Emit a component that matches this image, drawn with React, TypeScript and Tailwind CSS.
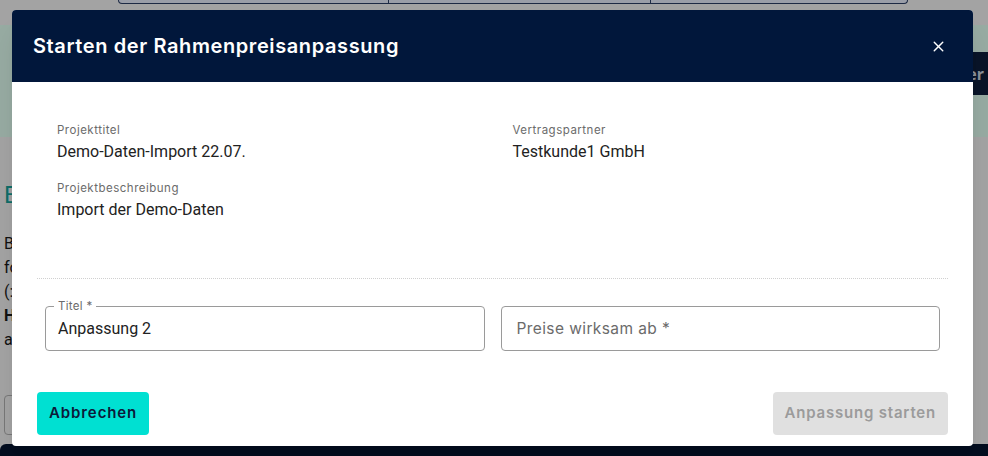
import { X } from 'lucide-react'

const heading = "font-['Inter','Noto_Sans',sans-serif]"
const body = "font-['Roboto','Liberation_Sans',sans-serif]"

function Backdrop() {
  return (
    <div className="pointer-events-none flex h-full flex-col">
      <div className="ml-[118px] flex h-[4px] w-[790px] rounded-b-[4px] border border-t-0 border-[#1d2a44] bg-[#9a9ea8]">
        <div className="w-[270px] border-r border-[#1d2a44]" />
        <div className="w-[262px] border-r border-[#1d2a44]" />
      </div>
      <div className="mt-[21px] flex h-[112px] items-start bg-[#97aba2]">
        <div className="ml-auto mt-[27px] flex h-[43px] w-[60px] items-center justify-end bg-[#091428] pr-1 text-[16px] font-bold text-[#8a9099]">
          er
        </div>
      </div>
      <div className={`${body} mt-[40px] pl-[4px] text-[24px] text-[#0f6d68]`}>E</div>
      <div className={`${body} mt-[20px] flex flex-col gap-[2px] pl-[4px] text-[16px] leading-[22px] text-[#111]`}>
        <div>B</div>
        <div>fo</div>
        <div>(:</div>
        <div className="font-bold">H</div>
        <div>a</div>
      </div>
      <div className="ml-[4px] mt-[44px] h-[40px] w-[30px] rounded-[4px] border border-[#777]" />
      <div className="mt-auto h-[12px] rounded-tl-[6px] bg-[#030d1f]" />
    </div>
  )
}

function Info({ label, value }: { label: string; value: string }) {
  return (
    <div className="flex flex-col">
      <div className={`${heading} text-[11.5px] leading-[16px] tracking-[0.5px] text-[#6b6b6b]`}>{label}</div>
      <div className={`${body} mt-[4px] text-[16px] leading-[20px] text-[#222]`}>{value}</div>
    </div>
  )
}

export default function App() {
  return (
    <div className="relative h-[456px] w-[988px] overflow-hidden bg-[#a3a3a3]">
      <Backdrop />
      <div className="absolute left-[12px] top-[10px] flex h-[436px] w-[961px] flex-col overflow-hidden rounded-[4px] bg-white shadow-xl">
        <div className="flex h-[72px] shrink-0 items-center justify-between bg-[#01173b] pl-[21px] pr-[26px]">
          <h2 className={`${heading} text-[20px] font-semibold tracking-[0.6px] text-white`}>
            Starten der Rahmenpreisanpassung
          </h2>
          <X size={17} strokeWidth={2} className="text-white" />
        </div>

        <div className="flex flex-1 flex-col px-[25px]">
          <div className="grid grid-cols-2 gap-x-[16px] px-[20px] pt-[40px]">
            <div className="flex flex-col gap-[18px]">
              <Info label="Projekttitel" value="Demo-Daten-Import 22.07." />
              <Info label="Projektbeschreibung" value="Import der Demo-Daten" />
            </div>
            <div className="pl-[12px]">
              <Info label="Vertragspartner" value="Testkunde1 GmbH" />
            </div>
          </div>

          <div className="mt-[58px] border-t border-dotted border-[#d0d0d0]" />

          <div className="mt-[27px] grid grid-cols-2 gap-x-[16px] px-[8px]">
            <div className="relative h-[45px] rounded-[4px] border border-[#9a9a9a]">
              <span className={`${heading} absolute -top-[8px] left-[8px] bg-white px-[4px] text-[11.5px] leading-[14px] tracking-[0.3px] text-[#6b6b6b]`}>
                Titel *
              </span>
              <div className={`${body} flex h-full items-center pl-[12px] text-[16px] text-[#222]`}>
                Anpassung 2
              </div>
            </div>
            <div className="h-[45px] rounded-[4px] border border-[#9a9a9a]">
              <div className={`${heading} flex h-full items-center pl-[15px] text-[15.5px] tracking-[0.4px] text-[#6b6b6b]`}>
                Preise wirksam ab *
              </div>
            </div>
          </div>

          <div className="mt-[41px] flex items-center justify-between">
            <button className={`${heading} h-[43px] rounded-[4px] bg-[#00e0d2] px-[12px] text-[15px] font-semibold tracking-[0.9px] text-[#0c1a3a]`}>
              Abbrechen
            </button>
            <button className={`${heading} h-[43px] rounded-[4px] bg-[#e0e0e0] px-[12px] text-[15px] font-semibold tracking-[0.8px] text-[#9b9b9b]`}>
              Anpassung starten
            </button>
          </div>
        </div>
      </div>
    </div>
  )
}
